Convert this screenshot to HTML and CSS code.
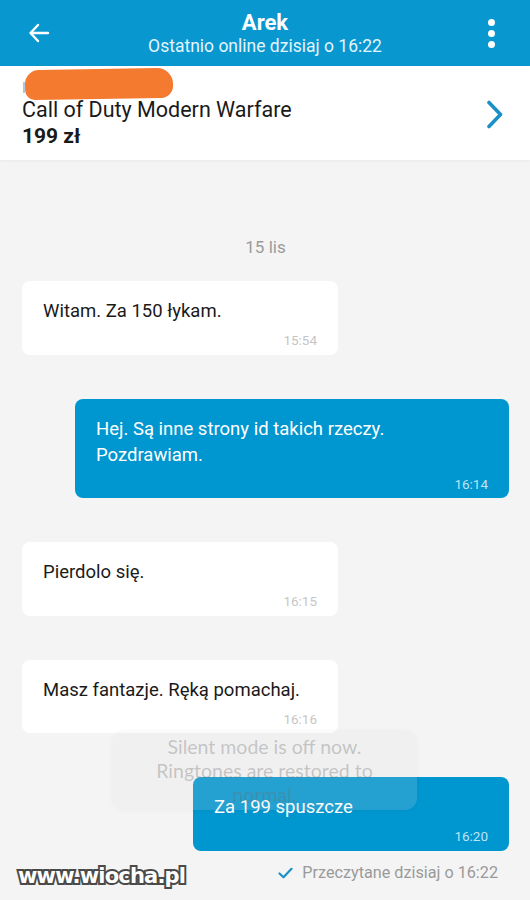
FILE: index.html
```html
<!DOCTYPE html>
<html lang="pl">
<head>
    <meta charset="UTF-8">
    <meta name="viewport" content="width=device-width, initial-scale=1.0">
    <title>Arek</title>
    <link rel="stylesheet" href="styles.css">
</head>
<body>
    <div class="topbar">
        <div class="back">
            <svg width="22" height="22" viewBox="0 0 22 22"><path d="M20 11H3M10 3L2.5 11L10 19" fill="none" stroke="#fff" stroke-width="2.4" stroke-linecap="round" stroke-linejoin="round"/></svg>
        </div>
        <div class="title">
            <div class="name">Arek</div>
            <div class="status">Ostatnio online dzisiaj o 16:22</div>
        </div>
        <div class="menu">
            <span></span><span></span><span></span>
        </div>
    </div>

    <div class="product">
        <div class="product-info">
            <div class="seller"><span class="hidden-text">I</span><span class="scribble"></span></div>
            <div class="product-name">Call of Duty Modern Warfare</div>
            <div class="product-price">199 zł</div>
        </div>
        <svg class="chevron" width="18" height="29" viewBox="0 0 18 29"><path d="M3 2.5L14.5 14.5L3 26.5" fill="none" stroke="#1b90c6" stroke-width="3.6" stroke-linecap="round" stroke-linejoin="round"/></svg>
    </div>

    <div class="chat">
        <div class="date">15 lis</div>

        <div class="msg in">
            <div class="text">Witam. Za 150 łykam.</div>
            <div class="time">15:54</div>
        </div>
        <div class="msg out wide">
            <div class="text">Hej. Są inne strony id takich rzeczy.<br>Pozdrawiam.</div>
            <div class="time">16:14</div>
        </div>
        <div class="msg in">
            <div class="text">Pierdolo się.</div>
            <div class="time">16:15</div>
        </div>
        <div class="msg in">
            <div class="text">Masz fantazje. Ręką pomachaj.</div>
            <div class="time">16:16</div>
        </div>
        <div class="msg out">
            <div class="text">Za 199 spuszcze</div>
            <div class="time">16:20</div>
        </div>

        <div class="receipt">
            <svg width="15" height="12" viewBox="0 0 15 12"><path d="M1.5 6.5L5.5 10.2L13.5 1.8" fill="none" stroke="#1b90c6" stroke-width="2.2" stroke-linecap="round" stroke-linejoin="round"/></svg>
            <span>Przeczytane dzisiaj o 16:22</span>
        </div>
    </div>

    <div class="toast">Silent mode is off now. Ringtones are restored to normal.</div>
    <div class="watermark">www.wiocha.pl</div>
</body>
</html>
```

FILE: styles.css
```css
body {
    margin: 0;
    width: 530px;
    height: 900px;
    overflow: hidden;
    position: relative;
    background-color: #f4f4f4;
    font-family: Roboto, 'Noto Sans', sans-serif;
    color: #1a1a1a;
}
.topbar {
    height: 66px;
    background-color: #0997d0;
    display: flex;
    align-items: center;
    color: #fff;
}
.back {
    width: 78px;
    display: flex;
    justify-content: center;
}
.title {
    flex: 1;
    text-align: center;
    padding-top: 1px;
}
.name {
    font-size: 22px;
    font-weight: bold;
    line-height: 24px;
}
.status {
    font-size: 17.5px;
    line-height: 22px;
    color: #e3f4fb;
}
.menu {
    width: 78px;
    display: flex;
    flex-direction: column;
    align-items: center;
    gap: 4px;
}
.menu span {
    width: 7px;
    height: 7px;
    border-radius: 50%;
    background: #fff;
}
.product {
    height: 94px;
    box-sizing: border-box;
    background: #fff;
    display: flex;
    align-items: flex-start;
    padding: 3px 26px 0 22px;
    box-shadow: 0 1px 3px rgba(0, 0, 0, 0.05);
}
.product-info {
    flex: 1;
}
.seller {
    height: 28px;
    position: relative;
}
.hidden-text {
    position: absolute;
    left: 0;
    top: 11px;
    font-size: 14px;
    color: #aaa;
}
.scribble {
    position: absolute;
    left: 3px;
    top: 0;
    width: 148px;
    height: 30px;
    background: #f47a2f;
    border-radius: 14px 16px 12px 10px;
    transform: rotate(-1deg);
}
.product-name {
    font-size: 21.5px;
    line-height: 26px;
}
.product-price {
    font-size: 21px;
    font-weight: bold;
    line-height: 26px;
}
.chevron {
    margin-top: 31px;
}
.chat {
    display: flex;
    flex-direction: column;
    align-items: flex-start;
    gap: 44px;
    padding: 77px 21px 0 22px;
}
.date {
    align-self: center;
    font-size: 17px;
    line-height: 20px;
    color: #9b9b9b;
    margin-bottom: -20px;
}
.msg {
    box-sizing: border-box;
    min-width: 316px;
    max-width: 434px;
    padding: 17px 21px 6.5px 21px;
    border-radius: 8px;
    background: #fff;
}
.msg .text {
    font-size: 18.5px;
    line-height: 26px;
}
.msg .time {
    text-align: right;
    font-size: 13.5px;
    line-height: 16px;
    margin-top: 8px;
    color: #c6c6c6;
}
.msg.out {
    align-self: flex-end;
    background: #0096cf;
    color: #fff;
}
.msg.out .time {
    color: rgba(255, 255, 255, 0.75);
}
.msg.wide {
    width: 434px;
}
.receipt {
    align-self: flex-end;
    display: flex;
    align-items: center;
    gap: 9px;
    margin-top: -32px;
    margin-right: 11px;
    font-size: 16.2px;
    line-height: 20px;
    color: #9a9a9a;
}
.toast {
    position: absolute;
    left: 112px;
    top: 730px;
    width: 305px;
    height: 80px;
    box-sizing: border-box;
    padding: 5px 30px 0;
    border-radius: 12px;
    background: rgba(225, 225, 225, 0.16);
    box-shadow: 0 1px 4px rgba(0, 0, 0, 0.03);
    text-align: center;
    font-family: Lato, 'Open Sans', sans-serif;
    font-size: 19.5px;
    line-height: 24px;
    color: rgba(110, 110, 110, 0.34);
}
.watermark {
    position: absolute;
    left: 18px;
    top: 862px;
    font-family: 'DejaVu Sans', sans-serif;
    font-weight: bold;
    font-size: 21px;
    line-height: 28px;
    letter-spacing: -0.8px;
    color: #fff;
    -webkit-text-stroke: 4px #4a4a4a;
    paint-order: stroke fill;
}
```
